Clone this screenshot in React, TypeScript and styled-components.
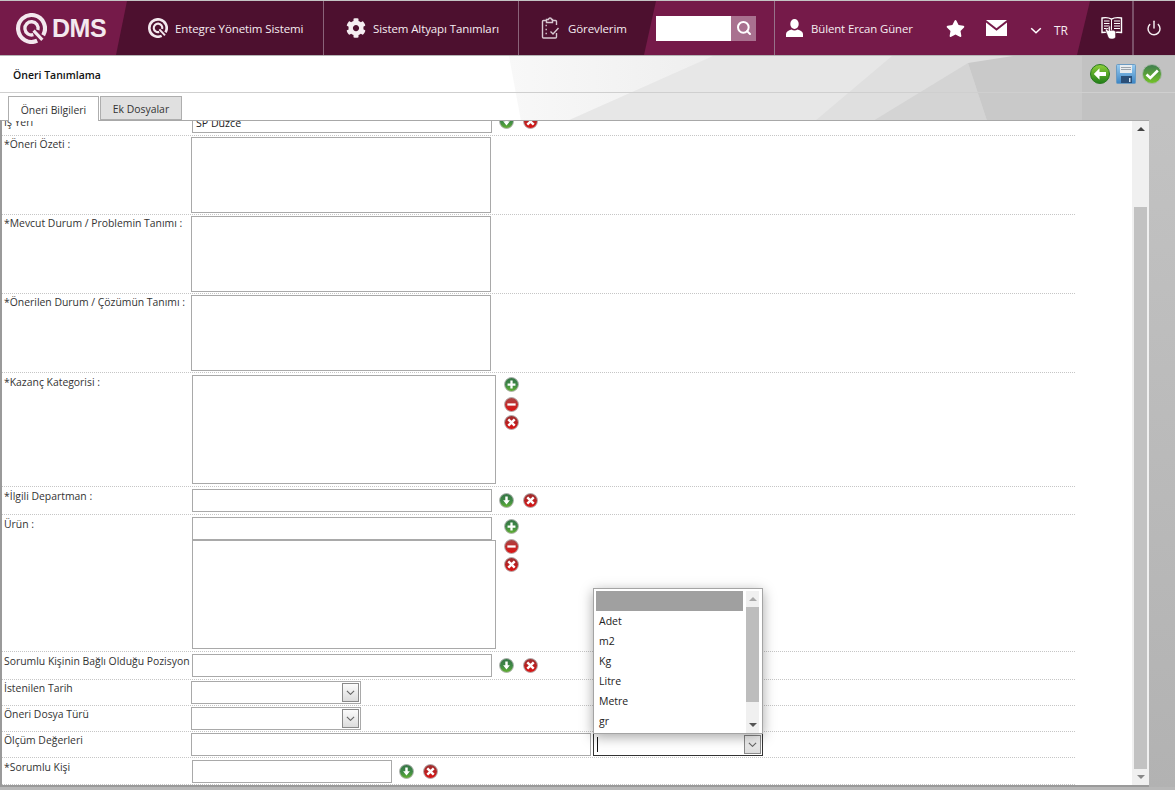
import React from "react";
import styled, { createGlobalStyle } from "styled-components";
import { FaCog, FaStar } from "react-icons/fa";
import { Power, Search } from "lucide-react";

const Global = createGlobalStyle`
  html, body { margin: 0; padding: 0; height: 100%; overflow: hidden; background: #fff; }
  * { box-sizing: border-box; }
`;

const Page = styled.div`
  width: 1175px; height: 790px; display: flex; flex-direction: column; overflow: hidden;
  font-family: "Open Sans", "Liberation Sans", sans-serif;
`;
const Header = styled.header`
  height: 56px; flex: none; display: flex; background: #4d102f; border-top: 1px solid #c4c4c4; border-bottom: 1px solid #b5b5b5; color: #fff;
`;
const LogoBlock = styled.div`
  width: 127px; flex: none; background: #751a49; clip-path: polygon(0 0, 100% 0, 116px 100%, 0 100%);
  display: flex; align-items: center; padding-left: 16px; gap: 5px;
`;
const LogoText = styled.span`
  font-family: "Liberation Sans", sans-serif; font-weight: 700; font-size: 25px; letter-spacing: -0.5px; color: #f3e8ee;
`;
const NavItem = styled.div<{ $w: number; $pl: number; $line?: boolean }>`
  width: ${p => p.$w}px; padding-left: ${p => p.$pl}px; flex: none; display: flex; align-items: center; gap: 7px;
  font-size: 11.5px; color: #f5edf1; letter-spacing: -0.1px;
  ${p => p.$line ? "border-right: 1px solid #8a6379;" : ""}
`;
const NavIconBox = styled.span`
  width: 20px; height: 22px; display: flex; align-items: center; justify-content: center; flex: none;
`;
const MagentaBlock = styled.div`
  width: 446px; flex: none; margin-left: -1px; background: #751a49; clip-path: polygon(12px 0, 100% 0, calc(100% - 13px) 100%, 0 100%);
  display: flex; align-items: center; padding-left: 12px;
`;
const SearchBox = styled.div`
  display: flex; width: 100px; height: 25px; flex: none;
`;
const SearchField = styled.div`
  width: 75px; background: #fff;
`;
const SearchBtn = styled.div`
  width: 25px; background: #a9718f; display: flex; align-items: center; justify-content: center;
`;
const VDivider = styled.div`
  width: 1px; height: 54px; background: #97728a; margin-left: 18px; flex: none;
`;
const UserName = styled.span`
  font-size: 11.4px; color: #f5edf1; margin-left: 8px; width: 101px; flex: none; white-space: nowrap; letter-spacing: -0.1px;
`;
const TopIcon = styled.span<{ $ml: number; $mt?: number }>`
  margin-left: ${p => p.$ml}px; margin-top: ${p => p.$mt ?? 0}px; display: flex; align-items: center; flex: none;
`;
const Lang = styled.span`
  font-size: 12px; margin-left: 12px; margin-top: 4px; color: #f5edf1;
`;
const DarkCell = styled.div<{ $w: number; $line?: boolean; $pl: number }>`
  width: ${p => p.$w}px; flex: none; display: flex; align-items: center; padding-left: ${p => p.$pl}px;
  ${p => p.$line ? "border-right: 2px solid #7a5068;" : ""}
`;

const Main = styled.main`
  position: relative; flex: 1; display: flex; flex-direction: column; min-height: 0; background: #fff;
`;
const Backdrop = styled.svg`
  position: absolute; left: 0; top: 0; width: 1175px; height: 734px; z-index: 0;
`;
const TitleBar = styled.div`
  position: relative; height: 37px; flex: none; display: flex; align-items: center; justify-content: space-between;
  border-bottom: 1px solid #cfcfcf; padding: 0 13px 0 13px;
`;
const Title = styled.h1`
  margin: 1px 0 0; font-size: 10.5px; font-weight: 600; color: #111; font-family: "Open Sans", sans-serif;
`;
const Actions = styled.div`
  display: flex; gap: 6px; align-items: center;
`;
const TabBar = styled.div`
  position: relative; height: 28px; flex: none; display: flex; align-items: flex-end; padding-left: 8px; gap: 1px; z-index: 2; margin-bottom: -1px;
`;
const Tab = styled.div<{ $active?: boolean }>`
  height: ${p => p.$active ? 25 : 24}px; display: flex; align-items: center; justify-content: center; padding-top: 1px;
  width: ${p => p.$active ? 91 : 82}px; font-size: 10.4px; color: #333;
  background: ${p => p.$active ? "#fff" : "#e0e0e0"};
  border: 1px solid #aeaeae; ${p => p.$active ? "border-bottom: none;" : ""}
  ${p => p.$active ? "" : "margin-bottom: 1px;"}
`;
const Panel = styled.div`
  position: relative; width: 1149px; height: 667px; flex: none; display: flex; background: #fff;
  border-top: 1px solid #a8a8a8; border-left: 2px solid #9a9a9a; border-bottom: 2px solid #9a9a9a; z-index: 1;
`;
const FormArea = styled.div`
  flex: 1; min-width: 0; overflow: hidden; padding-right: 57px;
`;
const Form = styled.div`
  margin-top: -15px;
`;
const Row = styled.div<{ $h: number; $pad: number }>`
  height: ${p => p.$h}px; padding: ${p => p.$pad}px 0 0 2px; display: flex; align-items: flex-start;
  border-bottom: 1px dotted #c6c6c6; white-space: nowrap;
`;
const Label = styled.div`
  width: 188px; flex: none; font-size: 10.4px; line-height: 14px; color: #333;
  font-family: "Open Sans", sans-serif;
`;
const LabelSlot = styled.div<{ $top: number }>`
  width: 188px; flex: none; height: 16px; margin-top: ${p => p.$top}px;
`;
const TextBox = styled.div<{ $w: number; $h: number; $shift?: number; $lh?: number }>`
  width: ${p => p.$w}px; height: ${p => p.$h}px; margin-left: ${p => p.$shift ?? 0}px; flex: none;
  border: 1px solid #a9a9a9; background: #fff; font-size: 10.6px; line-height: ${p => p.$lh ?? 20}px; padding-left: 3px; color: #222;
`;
const Stack = styled.div`
  display: flex; flex-direction: column; flex: none;
`;
const IconCol = styled.div`
  display: flex; flex-direction: column; margin: 2px 0 0 8px; flex: none;
`;
const IconPair = styled.div`
  display: flex; gap: 9px; margin: 4px 0 0 7px; flex: none;
`;
const SelectBox = styled.div<{ $focus?: boolean; $w: number }>`
  width: ${p => p.$w}px; height: 23px; flex: none; margin-left: ${p => p.$focus ? 2 : -1}px; display: flex; align-items: center; justify-content: flex-end;
  background: #fff; position: relative;
  border: 1px solid ${p => p.$focus ? "#333" : "#a9a9a9"}; padding-right: 1px;
`;
const Caret = styled.span`
  position: absolute; left: 3px; top: 3px; width: 1px; height: 15px; background: #111;
`;
const SelectBtn = styled.div`
  width: 17px; height: 19px; border: 1px solid #8a8a8a; background: linear-gradient(#fbfbfb, #dcdcdc);
  display: flex; align-items: center; justify-content: center;
`;
const ScrollBar = styled.div`
  width: 17px; flex: none; background: #f0f0f0; display: flex; flex-direction: column; align-items: center; position: relative;
  padding-top: 86px;
`;
const ScrollThumb = styled.div`
  width: 13px; height: 562px; background: #c2c2c2;
`;
const Arrow = styled.span<{ $down?: boolean; $color: string; $size?: number }>`
  position: absolute; left: 50%; margin-left: -${p => p.$size ?? 4}px; width: 0; height: 0;
  border-left: ${p => p.$size ?? 4}px solid transparent; border-right: ${p => p.$size ?? 4}px solid transparent;
  ${p => p.$down
    ? `bottom: 6px; border-top: ${(p.$size ?? 4)}px solid ${p.$color};`
    : `top: 6px; border-bottom: ${(p.$size ?? 4)}px solid ${p.$color};`}
`;
const Popup = styled.div`
  position: absolute; left: 591px; top: 467px; width: 170px; height: 146px; z-index: 5; background: #fff;
  border: 1px solid #a4a4a4; box-shadow: 0 3px 12px rgba(0,0,0,.35); display: flex; padding: 2px 3px 0 2px; gap: 3px;
`;
const PopupList = styled.div`
  width: 147px; flex: none; display: flex; flex-direction: column;
`;
const PopupItem = styled.div<{ $selected?: boolean }>`
  height: 20px; line-height: 20px; font-size: 10.5px; color: #222; padding-left: 3px; background: ${p => p.$selected ? "#a0a0a0" : "transparent"};
`;
const PopupScroll = styled.div`
  width: 13px; flex: none; height: 142px; background: #f0f0f0; position: relative; padding-top: 16px;
`;
const PopupThumb = styled.div`
  width: 13px; height: 95px; background: #bdbdbd;
`;
const Gap = styled.span<{ $h: number }>`
  height: ${p => p.$h}px; flex: none;
`;

const Glossy = ({ kind, size = 15 }: { kind: "plus" | "minus" | "x" | "down"; size?: number }) => {
  const green = kind === "plus" || kind === "down";
  const id = `g-${kind}`;
  return (
    <svg width={size} height={size} viewBox="0 0 16 16" style={{ display: "block", flex: "none" }}>
      <defs>
        <linearGradient id={id} x1="0" y1="0" x2="0" y2="1">
          <stop offset="0" stopColor={green ? "#357545" : kind === "minus" ? "#a84848" : "#9c2f30"} />
          <stop offset="0.55" stopColor={green ? "#3f8a45" : kind === "minus" ? "#c42a2a" : "#bb2020"} />
          <stop offset="1" stopColor={green ? "#63b32f" : "#e01010"} />
        </linearGradient>
      </defs>
      <circle cx="8" cy="8" r="7.4" fill={`url(#${id})`} stroke="#b0b0b0" strokeWidth="1" />
      {kind === "plus" && <path d="M8 3.8v8.4M3.8 8h8.4" stroke="#fff" strokeWidth="2.4" />}
      {kind === "minus" && <path d="M3.6 8h8.8" stroke="#fff" strokeWidth="2.4" />}
      {kind === "x" && <path d="M4.6 4.6l6.8 6.8M11.4 4.6l-6.8 6.8" stroke="#fff" strokeWidth="2.6" />}
      {kind === "down" && <path d="M6.7 3.6h2.6v4.2h2.3L8 12.2 4.4 7.8h2.3z" fill="#fff" />}
    </svg>
  );
};

const Ring = ({ size }: { size: number }) => (
  <svg width={size} height={size} viewBox="0 0 30 30" fill="none" stroke="#f3e8ee" style={{ flex: "none" }}>
    <path d="M26.3 21.5A13 13 0 1 0 20.5 26.8" strokeWidth="4" />
    <path d="M21.2 16.5A6.4 6.4 0 1 0 16.8 21" strokeWidth="3.2" />
    <path d="M17 17l8.5 9" strokeWidth="3" />
  </svg>
);

const UserIcon = () => (
  <svg width="17" height="18" viewBox="0 0 17 18" fill="#fff">
    <ellipse cx="8.5" cy="5" rx="4.2" ry="5" />
    <path d="M5.5 10.5c-3 .8-5.500 2.300-5.500 4.500v3h17v-3c0-2.200-2.500-3.700-5.500-4.500-1.800 1.300-4.200 1.300-6 0z" />
  </svg>
);

const Clipboard = () => (
  <svg width="20" height="22" viewBox="0 0 20 22" fill="none" stroke="#d8c8d1" strokeWidth="1.4">
    <path d="M5.5 3.5H2.5a1 1 0 0 0-1 1v15.500a1 1 0 0 0 1 1h12a1 1 0 0 0 1-1V16M15.500 8V4.500a1 1 0 0 0-1-1h-3" />
    <path d="M5.5 5.500v-3h2a1.500 1.500 0 0 1 3 0h1v3z" />
    <path d="M4.5 8.500h1.400M4.500 12.500h1.400M4.500 16.500h1.400" strokeWidth="1.6" />
    <path d="M9.5 14.500l2.500 2.500 5.500-6" />
  </svg>
);

const Mail = () => (
  <svg width="21" height="16" viewBox="0 0 21 16" fill="#fff">
    <path d="M0 0h21L10.5 8.2z" />
    <path d="M0 2.6v13.4h21V2.600l-10.500 8.200z" />
  </svg>
);

const BookHand = () => (
  <svg width="22" height="24" viewBox="0 0 22 24" fill="none">
    <path d="M10.5 3.2C8 1.600 4 1.400 1 2v14.500c3-.5 7-.4 9.500 1.200 2.500-1.600 6.500-1.700 10-1.200V2c-3.500-.6-7.500-.4-10 1.200z" fill="#4d102f" stroke="#fff" strokeWidth="1.4" />
    <path d="M3 5h5.500M3 7.500h5.500M3 10h5.500M3 12.500h5.500M13 5h6M13 7.500h6M13 10h6M13 12.500h6" stroke="#fff" strokeWidth="1.2" />
    <path d="M10.5 3.200V17" stroke="#fff" strokeWidth="1" />
    <path d="M4.5 14.500c-.5-1.200 1-2 1.800-1l1 1.300V11c0-1.300 2-1.300 2 0v3.500c2-.7 5.300-.4 5.300 1.500v4.500c0 1.500-1.300 2.500-3 2.500H10c-1.300 0-2.200-.6-2.800-1.700z" fill="#fff" stroke="#4d102f" strokeWidth=".6" />
  </svg>
);

const Chevron = ({ c = "#666", w = 9 }: { c?: string; w?: number }) => (
  <svg width={w} height={w * 0.6} viewBox="0 0 10 6" fill="none" stroke={c} strokeWidth="1.3" style={{ display: "block" }}>
    <path d="M1 1l4 3.800L9 1" />
  </svg>
);

const BackIcon = () => (
  <svg width="20" height="20" viewBox="0 0 20 20" style={{ display: "block" }}>
    <defs>
      <linearGradient id="bk" x1="0" y1="0" x2="0" y2="1">
        <stop offset="0" stopColor="#8fd03a" /><stop offset="1" stopColor="#1f7d18" />
      </linearGradient>
    </defs>
    <circle cx="10" cy="10" r="9.5" fill="url(#bk)" stroke="#2a7a20" strokeWidth="1" />
    <path d="M9.5 4.200L3.800 10l5.700 5.800v-3.700H16V7.900H9.500z" fill="#fff" />
  </svg>
);
const SaveIcon = () => (
  <svg width="20" height="20" viewBox="0 0 20 20" style={{ display: "block" }}>
    <defs>
      <linearGradient id="sv" x1="0" y1="0" x2="0" y2="1">
        <stop offset="0" stopColor="#9accf0" /><stop offset="1" stopColor="#3b85c4" />
      </linearGradient>
    </defs>
    <path d="M1.500 0.500h17a1 1 0 0 1 1 1v17a1 1 0 0 1-1 1h-17a1 1 0 0 1-1-1v-17a1 1 0 0 1 1-1z" fill="url(#sv)" stroke="#6b9bc2" />
    <rect x="4" y="1" width="12" height="8" fill="#e8ecef" />
    <rect x="5" y="3" width="10" height="1" fill="#9aa3ab" />
    <rect x="5" y="5" width="10" height="1" fill="#9aa3ab" />
    <rect x="5" y="12" width="11" height="7" fill="#2a4f78" />
    <rect x="13" y="14" width="1.500" height="4" fill="#cfe0ee" />
  </svg>
);
const OkIcon = () => (
  <svg width="20" height="20" viewBox="0 0 20 20" style={{ display: "block" }}>
    <defs>
      <linearGradient id="ok" x1="0" y1="0" x2="0" y2="1">
        <stop offset="0" stopColor="#3e7d50" /><stop offset="1" stopColor="#74c326" />
      </linearGradient>
    </defs>
    <circle cx="10" cy="10" r="9.500" fill="url(#ok)" stroke="#a8b8a8" strokeWidth="1" />
    <path d="M4.500 10.500l3.800 3.500 7.500-7.500" fill="none" stroke="#fff" strokeWidth="2.600" />
  </svg>
);

const Pair = () => (
  <IconPair><Glossy kind="down" /><Glossy kind="x" /></IconPair>
);
const Col = () => (
  <IconCol>
    <Glossy kind="plus" />
    <Gap $h={5} />
    <Glossy kind="minus" />
    <Gap $h={3} />
    <Glossy kind="x" />
  </IconCol>
);

export default function App() {
  return (
    <Page>
      <Global />
      <Header>
        <LogoBlock>
          <Ring size={31} />
          <LogoText>DMS</LogoText>
        </LogoBlock>
        <NavItem $w={197} $pl={21} $line><NavIconBox><Ring size={20} /></NavIconBox>Entegre Yönetim Sistemi</NavItem>
        <NavItem $w={195} $pl={22} $line><NavIconBox><FaCog size={20} color="#f5edf1" /></NavIconBox>Sistem Altyapı Tanımları</NavItem>
        <NavItem $w={126} $pl={22}><NavIconBox><Clipboard /></NavIconBox>Görevlerim</NavItem>
        <MagentaBlock>
          <SearchBox>
            <SearchField />
            <SearchBtn><Search size={16} strokeWidth={3} color="#fff" /></SearchBtn>
          </SearchBox>
          <VDivider />
          <TopIcon $ml={11}><UserIcon /></TopIcon>
          <UserName>Bülent Ercan Güner</UserName>
          <TopIcon $ml={34}><FaStar size={19} color="#fff" /></TopIcon>
          <TopIcon $ml={21}><Mail /></TopIcon>
          <TopIcon $ml={23} $mt={5}><Chevron c="#fff" w={12} /></TopIcon>
          <Lang>TR</Lang>
        </MagentaBlock>
        <DarkCell $w={44} $pl={11} $line><BookHand /></DarkCell>
        <DarkCell $w={41} $pl={12}><Power size={16} strokeWidth={2.2} color="#f5edf1" /></DarkCell>
      </Header>
      <Main>
        <Backdrop viewBox="0 0 1175 734">
          <defs>
            <linearGradient id="floor" x1="0" y1="0" x2="0" y2="1">
              <stop offset="0" stopColor="#c2c2c2" /><stop offset="1" stopColor="#b2b2b2" />
            </linearGradient>
            <linearGradient id="shardA" x1="0" y1="0" x2="1" y2="0">
              <stop offset="0" stopColor="#f8f8f8" /><stop offset="1" stopColor="#eeeeee" />
            </linearGradient>
          </defs>
          <polygon points="509,0 720,0 575,65 521,65" fill="url(#shardA)" />
          <polygon points="713,0 1175,0 1175,65 567,65" fill="#e7e7e7" />
          <polygon points="892,0 1175,0 1175,65 815,65" fill="#dfdfdf" />
          <polygon points="968,7 987,65 873,65" fill="#d4d4d4" />
          <polygon points="1013,0 1175,0 1175,65 987,65 968,7" fill="#c9c9c9" />
          <rect x="1082" y="0" width="93" height="65" fill="#c2c2c2" />
          <rect x="1149" y="64" width="26" height="670" fill="url(#floor)" />
          <rect x="0" y="731" width="1175" height="3" fill="#b8b8b8" />
        </Backdrop>
        <TitleBar>
          <Title>Öneri Tanımlama</Title>
          <Actions><BackIcon /><SaveIcon /><OkIcon /></Actions>
        </TitleBar>
        <TabBar>
          <Tab $active>Öneri Bilgileri</Tab>
          <Tab>Ek Dosyalar</Tab>
        </TabBar>
        <Panel>
          <FormArea>
            <Form>
              <Row $h={30} $pad={4}>
                <LabelSlot $top={5}><Label>İş Yeri</Label></LabelSlot>
                <TextBox $w={300} $h={23} $lh={25}>SP Düzce</TextBox>
                <Pair />
              </Row>
              <Row $h={79} $pad={1}>
                <Label>*Öneri Özeti :</Label>
                <TextBox $w={300} $h={76} $shift={-1} />
              </Row>
              <Row $h={79} $pad={1}>
                <Label>*Mevcut Durum / Problemin Tanımı :</Label>
                <TextBox $w={300} $h={76} $shift={-1} />
              </Row>
              <Row $h={79} $pad={1}>
                <Label>*Önerilen Durum / Çözümün Tanımı :</Label>
                <TextBox $w={300} $h={76} $shift={-1} />
              </Row>
              <Row $h={114} $pad={2}>
                <Label>*Kazanç Kategorisi :</Label>
                <TextBox $w={304} $h={109} />
                <Col />
              </Row>
              <Row $h={28} $pad={2}>
                <Label>*İlgili Departman :</Label>
                <TextBox $w={300} $h={23} />
                <Pair />
              </Row>
              <Row $h={137} $pad={2}>
                <Label>Ürün :</Label>
                <Stack>
                  <TextBox $w={300} $h={23} />
                  <TextBox $w={304} $h={109} />
                </Stack>
                <Col />
              </Row>
              <Row $h={28} $pad={2}>
                <Label>Sorumlu Kişinin Bağlı Olduğu Pozisyon</Label>
                <TextBox $w={300} $h={23} />
                <Pair />
              </Row>
              <Row $h={26} $pad={1}>
                <Label>İstenilen Tarih</Label>
                <SelectBox $w={170}><SelectBtn><Chevron /></SelectBtn></SelectBox>
              </Row>
              <Row $h={26} $pad={1}>
                <Label>Öneri Dosya Türü</Label>
                <SelectBox $w={170}><SelectBtn><Chevron /></SelectBtn></SelectBox>
              </Row>
              <Row $h={26} $pad={1}>
                <Label>Ölçüm Değerleri</Label>
                <TextBox $w={400} $h={23} $shift={-1} />
                <SelectBox $w={170} $focus><Caret /><SelectBtn><Chevron /></SelectBtn></SelectBox>
              </Row>
              <Row $h={27} $pad={2}>
                <Label>*Sorumlu Kişi</Label>
                <TextBox $w={200} $h={23} />
                <Pair />
              </Row>
            </Form>
          </FormArea>
          <ScrollBar>
            <Arrow $color="#444" $size={4} />
            <ScrollThumb />
            <Arrow $down $color="#888" $size={4} />
          </ScrollBar>
          <Popup>
            <PopupList>
              <PopupItem $selected />
              <PopupItem>Adet</PopupItem>
              <PopupItem>m2</PopupItem>
              <PopupItem>Kg</PopupItem>
              <PopupItem>Litre</PopupItem>
              <PopupItem>Metre</PopupItem>
              <PopupItem>gr</PopupItem>
            </PopupList>
            <PopupScroll>
              <Arrow $color="#aaa" $size={4} />
              <PopupThumb />
              <Arrow $down $color="#555" $size={4} />
            </PopupScroll>
          </Popup>
        </Panel>
      </Main>
    </Page>
  );
}
